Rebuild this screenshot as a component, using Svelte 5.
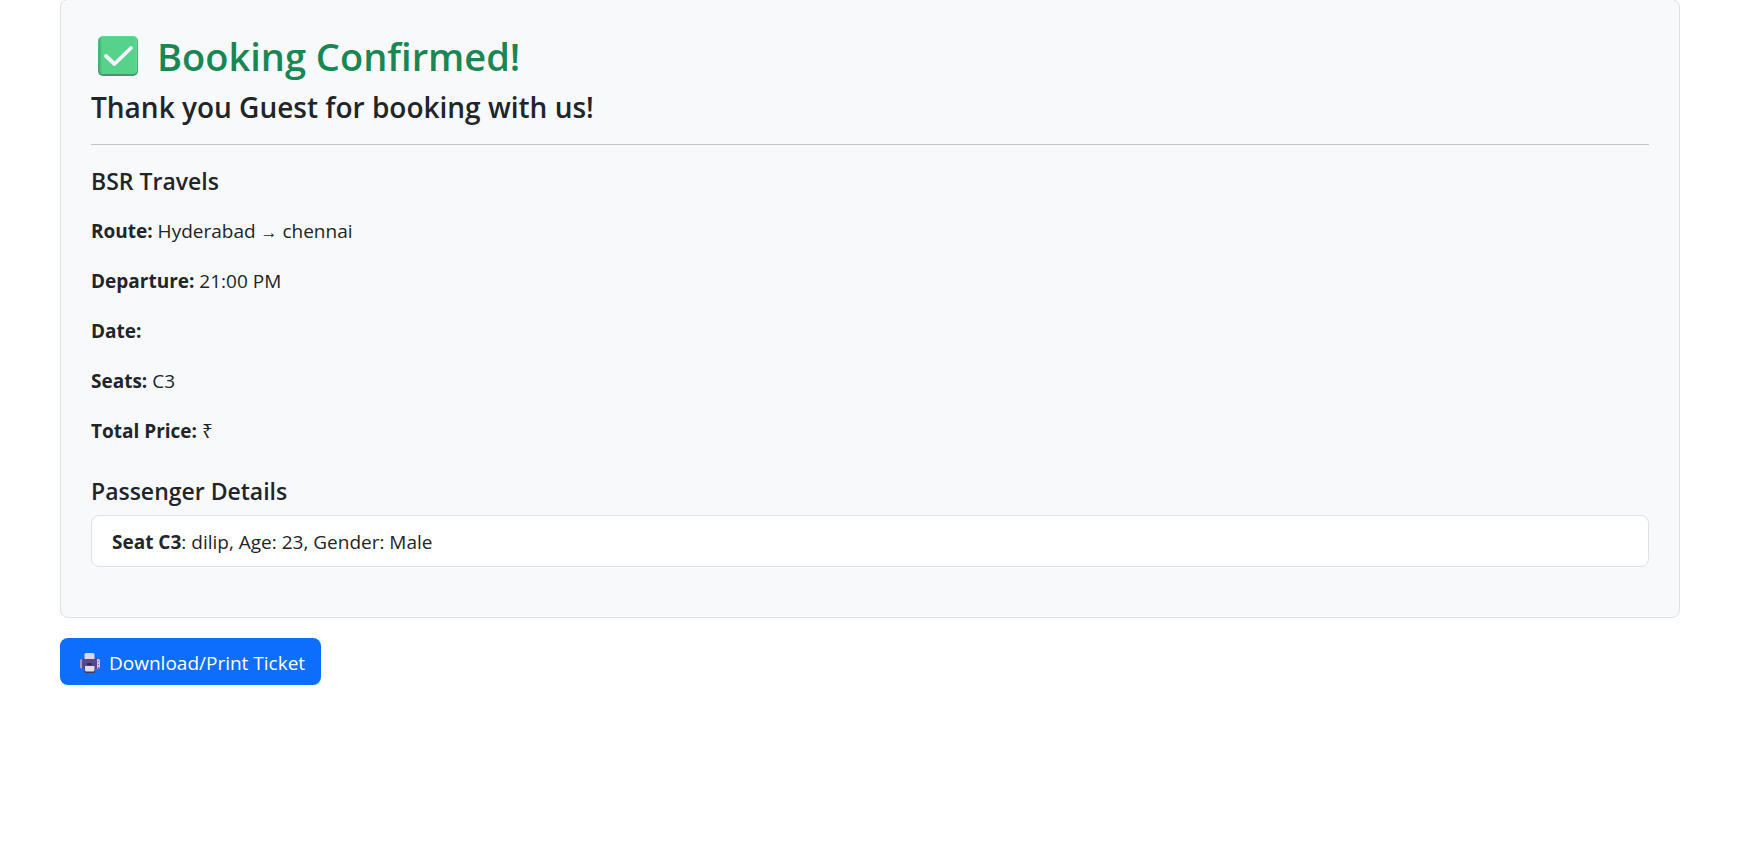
<script>
  const booking = {
    guest: 'Guest',
    operator: 'BSR Travels',
    from: 'Hyderabad',
    to: 'chennai',
    departure: '21:00 PM',
    date: '',
    seats: ['C3'],
    price: ''
  };

  const passengers = [{ seat: 'C3', name: 'dilip', age: 23, gender: 'Male' }];
</script>

<main>
  <section class="card">
    <h2>
      <svg class="check" viewBox="0 0 40 40" aria-hidden="true">
        <defs>
          <linearGradient id="check-edge" x1="0" y1="0" x2="0" y2="1">
            <stop offset="0" stop-color="#5fe096" />
            <stop offset="0.08" stop-color="#4fbf80" />
            <stop offset="0.9" stop-color="#45a870" />
            <stop offset="1" stop-color="#4a8f69" />
          </linearGradient>
          <linearGradient id="check-face" x1="0" y1="0" x2="1" y2="0">
            <stop offset="0" stop-color="#45a870" />
            <stop offset="0.08" stop-color="#57d28b" />
            <stop offset="0.94" stop-color="#57d28b" />
            <stop offset="1" stop-color="#5be093" />
          </linearGradient>
        </defs>
        <rect width="40" height="40" rx="5" fill="url(#check-edge)" />
        <rect x="1" y="1" width="38" height="37" rx="4" fill="url(#check-face)" />
        <path d="M8 20 16.500 28 33 12" fill="none" stroke="#f7f3fb" stroke-width="3.800" stroke-linecap="round" stroke-linejoin="round" />
      </svg>
      <span>Booking Confirmed!</span>
    </h2>
    <h4>Thank you {booking.guest} for booking with us!</h4>
    <hr />
    <h5 class="operator">{booking.operator}</h5>
    <p><strong>Route:</strong> {booking.from} <span class="arrow">→</span> {booking.to}</p>
    <p><strong>Departure:</strong> {booking.departure}</p>
    <p><strong>Date:</strong> {booking.date}</p>
    <p><strong>Seats:</strong> {booking.seats.join(', ')}</p>
    <p><strong>Total Price:</strong> ₹{booking.price}</p>

    <h5 class="details">Passenger Details</h5>
    <ul>
      {#each passengers as p}
        <li><strong>Seat {p.seat}</strong>: {p.name}, Age: {p.age}, Gender: {p.gender}</li>
      {/each}
    </ul>
  </section>

  <button type="button" onclick={() => window.print()}>
    <svg class="printer" viewBox="0 0 20 20" aria-hidden="true">
      <path d="M1.500 6H4v9.500H1.500A1.500 1.500 0 0 1 0 14V7.500A1.500 1.500 0 0 1 1.500 6z" fill="#a597b8" />
      <path d="M15.500 6h3A1.500 1.500 0 0 1 20 7.500V14a1.500 1.500 0 0 1-1.500 1.500h-3z" fill="#cdc5da" />
      <rect x="2" y="5" width="15" height="11" rx="1" fill="#54498f" />
      <path d="M6 0h7a1.500 1.500 0 0 1 1.500 1.500V6h-10V1.500A1.500 1.500 0 0 1 6 0z" fill="#dcd5e6" />
      <rect x="7" y="10" width="5" height="2" rx="1" fill="#2d2952" />
      <rect x="4.500" y="12.500" width="10.500" height="7.500" rx="1.500" fill="#43375f" />
      <path d="M5 13h9.500v4a1.500 1.500 0 0 1-1.500 1.500H6.500A1.500 1.500 0 0 1 5 17z" fill="#e3dcea" />
      <path d="M18 8h1v1h-1zM18 11h1v1h-1z" fill="#7d6c94" />
      <rect x="18" y="14" width="1.500" height="1.500" fill="#f0305a" />
    </svg>
    <span>Download/Print Ticket</span>
  </button>
</main>

<style>
  :global(body) {
    background: #fff;
  }

  main {
    margin-top: -1px;
    padding: 0 62px 20px 60px;
    color: #212529;
    font-family: 'Segoe UI', 'Open Sans', 'Noto Sans', sans-serif;
    font-size: 19px;
    line-height: 32px;
  }

  .card {
    padding: 30px;
    border: 1px solid #dee2e6;
    border-radius: 8px;
    background: #f8f9fa;
  }

  h2,
  h4,
  h5,
  p,
  ul {
    margin: 0;
  }

  h2,
  h4,
  h5 {
    font-weight: 600;
  }

  h2 {
    display: flex;
    align-items: center;
    gap: 19px;
    padding-left: 7px;
    margin-bottom: 6px;
    color: #198754;
    font-size: 38px;
    line-height: 52px;
  }

  .check {
    width: 40px;
    height: 40px;
    flex: none;
  }

  h4 {
    font-size: 28px;
    line-height: 38px;
  }

  hr {
    height: 1px;
    margin: 18px 0 20px;
    border: 0;
    background: #c2c4c6;
  }

  h5 {
    font-size: 23px;
    line-height: 32px;
  }

  .operator {
    margin-bottom: 18px;
  }

  p {
    margin-bottom: 18px;
  }

  .arrow {
    font-family: 'Liberation Sans', sans-serif;
    font-size: 17px;
    line-height: 1;
  }

  .details {
    margin: 28px 0 8px;
  }

  ul {
    margin-bottom: 20px;
    padding: 0;
    list-style: none;
    border: 1px solid #dee2e6;
    border-radius: 8px;
    background: #fff;
  }

  li {
    padding: 10px 20px 8px;
  }

  li + li {
    border-top: 1px solid #dee2e6;
  }

  button {
    display: flex;
    align-items: center;
    gap: 9px;
    margin-top: 20px;
    padding: 9px 16px 6px 20px;
    border: 0;
    border-radius: 8px;
    background: #0d6efd;
    color: #fff;
    font: inherit;
    cursor: pointer;
  }

  .printer {
    width: 20px;
    height: 20px;
    flex: none;
  }
</style>
